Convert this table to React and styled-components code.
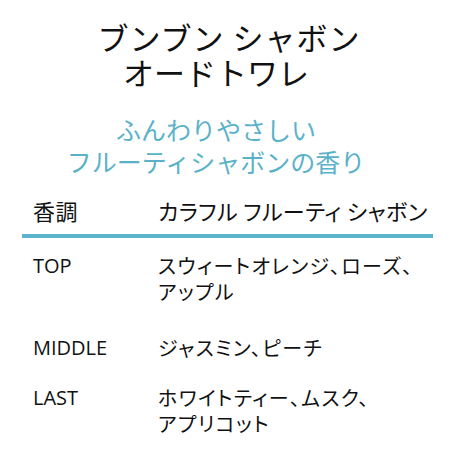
import React from "react";
import styled, { createGlobalStyle } from "styled-components";

const GlobalStyle = createGlobalStyle`
  body {
    margin: 0;
    background: #fff;
    font-family: "Noto Sans CJK JP", "Noto Sans", sans-serif;
  }
`;

const Page = styled.div`
  width: 456px;
  height: 456px;
  overflow: hidden;
  background: #fff;
  color: #111;
`;

const Heading = styled.div`
  padding: 19px 24px 0 0;
  text-align: center;
`;

const Title = styled.h1`
  margin: 0;
  font-size: 31px;
  font-weight: 400;
  line-height: 35px;
  color: #111;
`;

const TitleLine = styled.div`
  padding-left: ${(p) => p.$shift || 0}px;
  letter-spacing: ${(p) => p.$track || 0}px;
`;

const Catch = styled.h2`
  margin: 24px 0 0;
  font-size: 25px;
  font-weight: 400;
  line-height: 32px;
  color: #5ab2c9;
`;

const Table = styled.div`
  margin: 18px 23px 0 22px;
  white-space: nowrap;
  font-feature-settings: "palt";
`;

const HeadRow = styled.div`
  display: grid;
  grid-template-columns: 125px 1fr;
  padding: 0 0 9px 11px;
  border-bottom: 4px solid #5bb4cb;
  font-size: 22px;
  line-height: 30px;
  letter-spacing: 0.4px;
`;

const Row = styled.div`
  display: grid;
  grid-template-columns: 125px 1fr;
  padding: 0 0 0 11px;
  margin-top: ${(p) => p.$gap}px;
  font-size: 20px;
  line-height: 26px;
  letter-spacing: 1.4px;
`;

const Label = styled.div`
  font-family: "Open Sans", "Noto Sans CJK JP", sans-serif;
  letter-spacing: 0;
`;

const Value = styled.div``;

const notes = [
  { label: "TOP", value: ["スウィートオレンジ、ローズ、", "アップル"], gap: 15 },
  { label: "MIDDLE", value: ["ジャスミン、ピーチ"], gap: 30 },
  { label: "LAST", value: ["ホワイトティー、ムスク、", "アプリコット"], gap: 24 },
];

export default function App() {
  return (
    <Page>
      <GlobalStyle />
      <Heading>
        <Title>
          <TitleLine $shift={26} $track={1}>ブンブン シャボン</TitleLine>
          <TitleLine>オードトワレ</TitleLine>
        </Title>
        <Catch>
          ふんわりやさしい
          <br />
          フルーティシャボンの香り
        </Catch>
      </Heading>
      <Table>
        <HeadRow>
          <div>香調</div>
          <div>カラフル フルーティ シャボン</div>
        </HeadRow>
        {notes.map((n) => (
          <Row key={n.label} $gap={n.gap}>
            <Label>{n.label}</Label>
            <Value>
              {n.value.map((line) => (
                <div key={line}>{line}</div>
              ))}
            </Value>
          </Row>
        ))}
      </Table>
    </Page>
  );
}
